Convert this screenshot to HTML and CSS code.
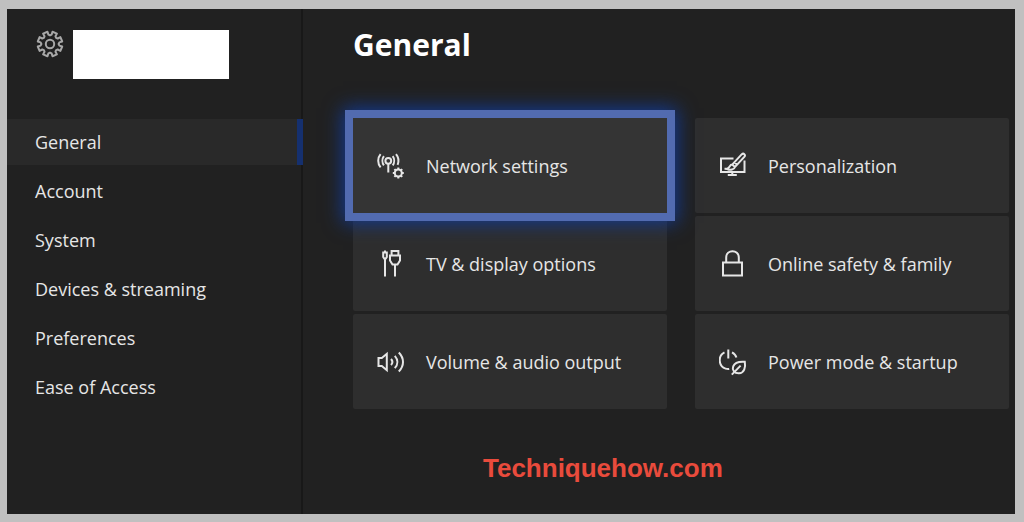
FILE: index.html
```
<!DOCTYPE html>
<html lang="en">
<head>
    <meta charset="UTF-8">
    <meta name="viewport" content="width=device-width, initial-scale=1.0">
    <title>Settings</title>
    <link rel="stylesheet" href="styles.css">
</head>
<body>
    <div class="screen">
        <aside class="sidebar">
            <div class="profile">
                <svg class="gear" viewBox="-14 -14 28 28">
                    <path d="M-1.6-9.4 0-8.6 1.6-9.4 2.5-12.2 6.9-10.4 5.5-7.7 6.1-6.1 7.7-5.5 10.4-6.9 12.2-2.5 9.4-1.6 8.6 0 9.4 1.6 12.2 2.5 10.4 6.9 7.7 5.5 6.1 6.1 5.5 7.7 6.9 10.4 2.5 12.2 1.6 9.4 0 8.6-1.6 9.4-2.5 12.2-6.9 10.4-5.5 7.7-6.1 6.1-7.7 5.5-10.4 6.9-12.2 2.5-9.4 1.6-8.6 0-9.4-1.6-12.2-2.5-10.4-6.9-7.7-5.5-6.1-6.1-5.5-7.7-6.9-10.4-2.5-12.2Z"/>
                    <circle r="4.2"/>
                </svg>
                <div class="profile-name"></div>
            </div>
            <nav class="menu">
                <a href="#" class="active">General</a>
                <a href="#">Account</a>
                <a href="#">System</a>
                <a href="#">Devices &amp; streaming</a>
                <a href="#">Preferences</a>
                <a href="#">Ease of Access</a>
            </nav>
        </aside>

        <main class="content">
            <h1>General</h1>
            <div class="tiles">
                <button type="button" class="tile selected">
                    <svg class="icon" viewBox="0 0 28 28">
                        <circle cx="11.3" cy="8.8" r="2.9"/>
                        <path d="M11.3 11.7V20.5M6.9 4.2C5 6.8 5 10.8 6.9 13.4M3.6 2.2C.4 6 .4 11.6 3.6 15.4M15.7 4.2C17.6 6.8 17.6 10.8 15.7 13.4M19 2.2C21.5 5.2 22 9.4 20.6 12.8"/>
                        <circle cx="21.3" cy="21" r="3.5"/>
                        <path d="M21.3 17.5V15.5M21.3 24.5V26.5M17.8 21H15.8M24.8 21H26.8M18.8 18.5 17.4 17.1M23.8 18.5 25.2 17.1M18.8 23.5 17.4 24.9M23.8 23.5 25.2 24.9"/>
                    </svg>
                    <span>Network settings</span>
                </button>
                <button type="button" class="tile">
                    <svg class="icon" viewBox="0 0 28 28">
                        <path d="M14.5 6.5H2V20H25.5V8.5M13.3 20V22.7M8.8 22.9H17.8M5.5 16.8H9"/>
                        <path d="M13.2 12.6 22.6 2.4C24.6.6 27 2.8 25.3 4.9L16 14.9ZM13.2 12.6C10.6 12.6 10.9 15.8 8.2 17 11.2 18.4 15.4 17.8 16 14.9M15.6 10.4 18.1 12.6"/>
                    </svg>
                    <span>Personalization</span>
                </button>
                <button type="button" class="tile">
                    <svg class="icon" viewBox="0 0 28 28">
                        <path d="M8 .5V2.5M6.2 2.5H9.8V7L8.8 8.5H7.2L6.2 7ZM8 8.5V26.5"/>
                        <path d="M14.6 5.5V1H21.4V5.5M13 5.5H23V10.5L20.5 14.5H15.5L13 10.5ZM18 14.5V26.5"/>
                    </svg>
                    <span>TV &amp; display options</span>
                </button>
                <button type="button" class="tile">
                    <svg class="icon" viewBox="0 0 28 28">
                        <path d="M4 12.5H23V25.5H4ZM7.2 12.5V7.5C7.2-1 19.8-1 19.8 7.5V12.5"/>
                    </svg>
                    <span>Online safety &amp; family</span>
                </button>
                <button type="button" class="tile">
                    <svg class="icon" viewBox="0 0 28 28">
                        <path d="M1.5 10H4.8L9.8 5.8V22.2L4.8 18H1.5ZM14 11C15.7 12.8 15.7 15.2 14 17M17.8 7.8C21.2 11.6 21.2 16.4 17.8 20.2M21.8 4.5C27.4 10.2 27.4 17.8 21.8 23.5"/>
                    </svg>
                    <span>Volume &amp; audio output</span>
                </button>
                <button type="button" class="tile">
                    <svg class="icon" viewBox="0 0 28 28">
                        <path d="M9.3 1.5V10.5M5.5 4.4C-1.4 7.8-.6 18.5 6.6 20.6 8 21 9 21.1 10.2 20.9M13 4.4C15.4 5.6 16.8 7.3 17.4 9.6"/>
                        <path d="M25.8 13.8C26.8 19.5 25.2 25 20 25.3 15.5 25.5 12.8 22 14.2 18.4 15.8 14.2 20.5 13.4 25.8 13.8ZM21.6 17.6 12.8 26.6"/>
                    </svg>
                    <span>Power mode &amp; startup</span>
                </button>
            </div>
            <p class="site">Techniquehow.com</p>
        </main>
    </div>
</body>
</html>
```
FILE: styles.css
```
* {
    box-sizing: border-box;
}

body {
    margin: 0;
    padding: 9px 9px 8px 7px;
    min-height: 100vh;
    display: flex;
    background-color: #c0c0c0;
    font-family: "Open Sans", "Noto Sans", sans-serif;
    color: #e6e6e6;
}

.screen {
    flex: 1;
    display: flex;
    background-color: #212121;
}

.sidebar {
    flex: 0 0 296px;
    border-right: 2px solid #181818;
}

.profile {
    display: flex;
    gap: 9px;
    padding: 21px 0 0 29px;
}

.profile-name {
    width: 156px;
    height: 49px;
    background-color: #fff;
}

.gear {
    width: 28px;
    height: 28px;
    fill: none;
    stroke: #a8a8a8;
    stroke-width: 2;
    stroke-linejoin: round;
}

.menu {
    display: flex;
    flex-direction: column;
    gap: 3px;
    margin-top: 40px;
}

.menu a {
    padding-left: 28px;
    line-height: 46px;
    font-size: 18px;
    color: #e6e6e6;
    text-decoration: none;
}

.menu .active {
    background-color: #292929;
    border-right: 6px solid #15306f;
    margin-right: -2px;
}

.content {
    flex: 1;
    padding: 14px 6px 0 50px;
}

h1 {
    margin: 0 0 51px;
    font-size: 30px;
    line-height: 44px;
    color: #fff;
}

.tiles {
    display: grid;
    grid-template-columns: 1fr 1fr;
    gap: 3px 28px;
}

.tile {
    display: flex;
    align-items: center;
    gap: 21px;
    height: 95px;
    padding: 0 24px;
    border: none;
    border-radius: 2px;
    background-color: #2e2e2e;
    color: #e6e6e6;
    font-family: inherit;
    font-size: 18px;
    text-align: left;
}

.selected {
    z-index: 1;
    border-radius: 0;
    background-color: #343434;
    box-shadow: 0 0 0 8px #526bb0, 0 0 18px 10px #123a94;
}

.icon {
    flex: none;
    width: 28px;
    height: 28px;
    fill: none;
    stroke: #e6e6e6;
    stroke-width: 2;
}

.site {
    margin: 43px 0 0 130px;
    font-family: "Liberation Sans", Arial, sans-serif;
    font-size: 26px;
    font-weight: bold;
    line-height: 32px;
    color: #e94b3c;
}
```
